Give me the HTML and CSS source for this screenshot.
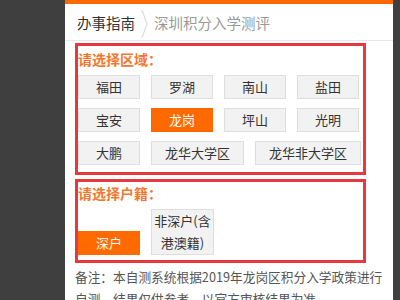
FILE: index.html
```html
<!DOCTYPE html>
<html lang="zh-CN">
<head>
  <meta charset="UTF-8">
  <meta name="viewport" content="width=device-width, initial-scale=1.0">
  <title>深圳积分入学测评</title>
  <link rel="stylesheet" href="styles.css">
</head>
<body>
  <div class="panel">
    <div class="topbar"></div>

    <div class="crumbs">
      <span class="crumb-main">办事指南</span>
      <svg class="crumb-sep" width="10" height="30" viewBox="0 0 10 30">
        <polyline points="2,1 7,15 2,29" fill="none" stroke="#dcdcdc" stroke-width="1.2"/>
      </svg>
      <span class="crumb-sub">深圳积分入学测评</span>
    </div>

    <div class="content">
      <div class="box">
        <div class="label">请选择区域：</div>
        <div class="options">
          <span class="opt">福田</span>
          <span class="opt">罗湖</span>
          <span class="opt">南山</span>
          <span class="opt">盐田</span>
          <span class="opt">宝安</span>
          <span class="opt active">龙岗</span>
          <span class="opt">坪山</span>
          <span class="opt">光明</span>
          <span class="opt">大鹏</span>
          <span class="opt">龙华大学区</span>
          <span class="opt">龙华非大学区</span>
        </div>
      </div>

      <div class="box box-huji">
        <div class="label">请选择户籍：</div>
        <div class="options options-bottom">
          <span class="opt active">深户</span>
          <span class="opt opt-narrow">非深户(含港澳籍)</span>
        </div>
      </div>

      <p class="note">备注：本自测系统根据2019年龙岗区积分入学政策进行自测，结果仅供参考，以官方审核结果为准。</p>
    </div>
  </div>
</body>
</html>
```

FILE: styles.css
```css
html, body { margin: 0; padding: 0; height: 100%; }
body { background: #3f3f3f; font-family: "Noto Sans CJK SC", "Noto Sans", sans-serif; overflow: hidden; }

.panel { margin-left: 65px; width: 328px; min-height: 100%; background: #fff; }
.topbar { height: 4px; background: #ff6a00; }

.crumbs { display: flex; align-items: center; height: 36px; padding-left: 12px; border-bottom: 1px solid #e8e8e8; }
.crumb-main { font-size: 14.5px; color: #333; }
.crumb-sep { margin: 4px 4px 0 5px; }
.crumb-sub { font-size: 14.5px; color: #999; }

.content { padding: 2px 8px 0 10px; }

.box { width: 291px; box-sizing: border-box; border: 3px solid #e5393f; padding: 2px 0 7px 0; }
.box-huji { margin-top: 4px; padding-top: 0; padding-bottom: 5px; }

.label { font-size: 14px; font-weight: bold; color: #f4772f; line-height: 22px; margin-bottom: 5px; }

.options { display: flex; flex-wrap: wrap; gap: 9px 11px; }
.options-bottom { align-items: flex-end; }

.opt { box-sizing: border-box; min-width: 62px; padding: 0 13px; line-height: 22px; font-size: 13px; color: #333; text-align: center; background: #f2f2f2; border: 1px solid #dedede; }
.opt.active { background: #ff6a00; border-color: #ff6a00; color: #fff; }
.opt-narrow { width: 63px; padding: 0; }

.note { margin: 3px 0 0 0; font-size: 12.7px; line-height: 22px; color: #555; }
```
